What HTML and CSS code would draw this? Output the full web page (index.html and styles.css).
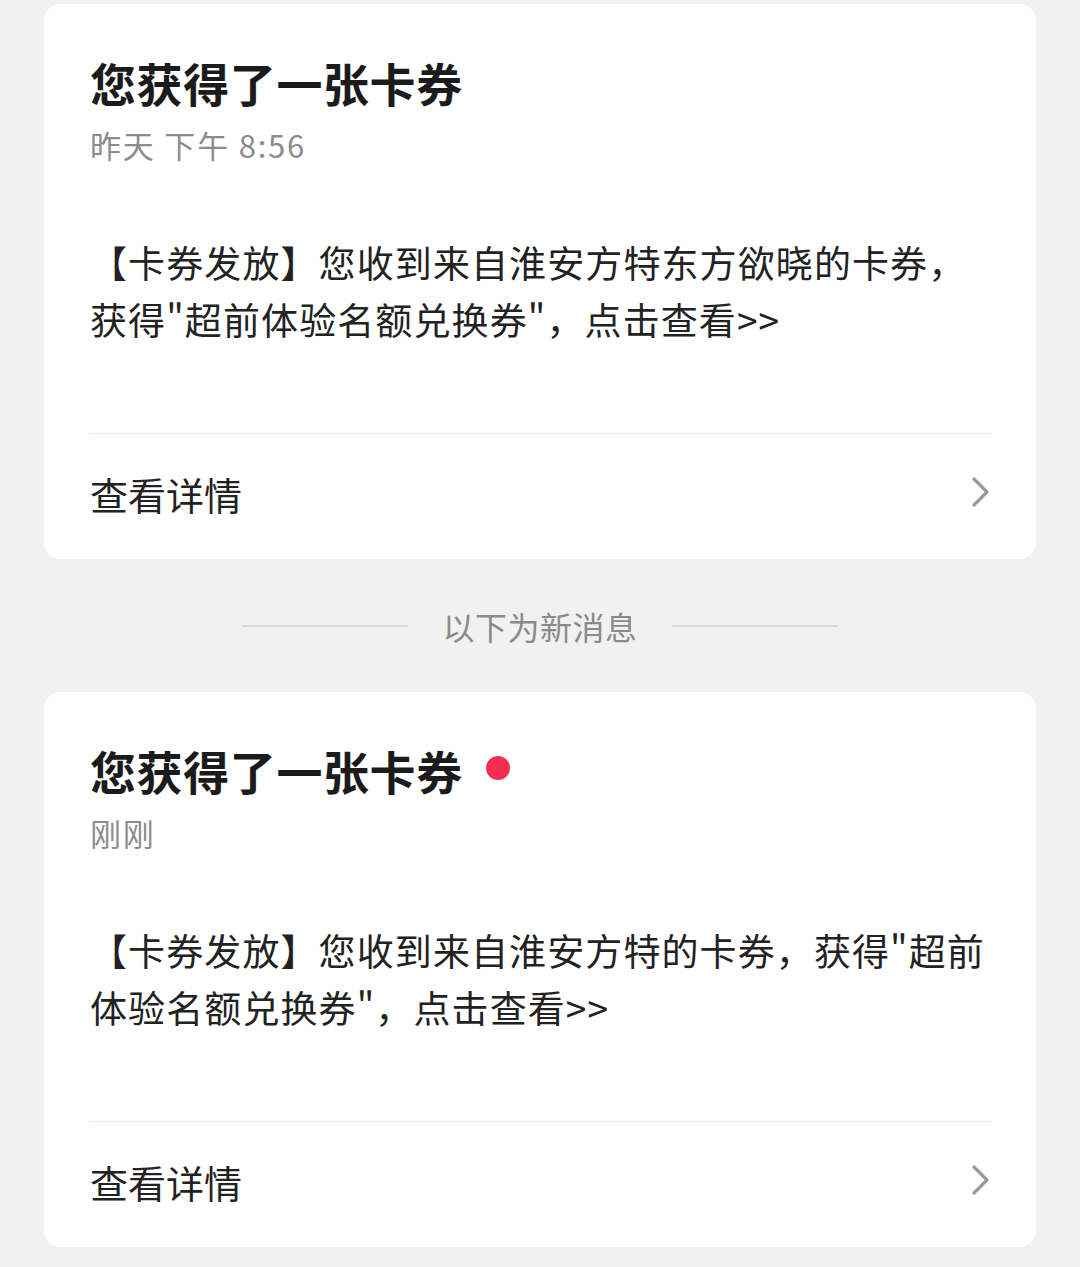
FILE: index.html
```html
<!DOCTYPE html>
<html lang="zh-CN">
<head>
<meta charset="utf-8">
<link rel="stylesheet" href="styles.css">
</head>
<body>
<div class="page">
  <div class="card card-first">
    <div class="title-row"><h2 class="title">您获得了一张卡券</h2></div>
    <div class="time">昨天 下午 8:56</div>
    <p class="body">【卡券发放】您收到来自淮安方特东方欲晓的卡券，<br>获得"超前体验名额兑换券"，点击查看&gt;&gt;</p>
    <div class="footer">
      <span class="footer-label">查看详情</span>
      <svg class="chevron" width="20" height="32" viewBox="0 0 20 32"><path d="M3 3 L16 16 L3 29" fill="none" stroke="#9a9a9a" stroke-width="3.2" stroke-linecap="round" stroke-linejoin="round"/></svg>
    </div>
  </div>

  <div class="separator">
    <span class="sep-line"></span>
    <span class="sep-text">以下为新消息</span>
    <span class="sep-line"></span>
  </div>

  <div class="card">
    <div class="title-row"><h2 class="title">您获得了一张卡券</h2><span class="dot"></span></div>
    <div class="time">刚刚</div>
    <p class="body">【卡券发放】您收到来自淮安方特的卡券，获得"超前<br>体验名额兑换券"，点击查看&gt;&gt;</p>
    <div class="footer">
      <span class="footer-label">查看详情</span>
      <svg class="chevron" width="20" height="32" viewBox="0 0 20 32"><path d="M3 3 L16 16 L3 29" fill="none" stroke="#9a9a9a" stroke-width="3.2" stroke-linecap="round" stroke-linejoin="round"/></svg>
    </div>
  </div>
</div>
</body>
</html>
```

FILE: styles.css
```css
* { box-sizing: border-box; }
html, body {
  margin: 0;
  padding: 0;
  background: #f1f1f1;
  font-family: "Noto Sans CJK SC", "Noto Sans", sans-serif;
}
.page {
  width: 1080px;
  height: 1267px;
  padding: 4px 44px 0 44px;
  overflow: hidden;
}
.card {
  background: #ffffff;
  border-radius: 16px;
  height: 555px;
  padding: 50px 44px 0 46px;
  display: flex;
  flex-direction: column;
}
.title-row {
  display: flex;
  align-items: center;
  height: 56px;
}
.title {
  margin: 0;
  font-size: 46px;
  line-height: 56px;
  font-weight: 700;
  letter-spacing: 0.6px;
  color: #1b1b1b;
}
.dot {
  width: 24px;
  height: 24px;
  border-radius: 50%;
  background: #f42e51;
  margin-left: 23px;
  margin-top: -4px;
}
.time {
  margin-top: 15px;
  font-size: 31px;
  line-height: 40px;
  letter-spacing: 1.8px;
  color: #8c8c8c;
}
.body {
  margin: 69px 0 0 0;
  font-size: 37px;
  line-height: 57px;
  letter-spacing: 1.1px;
  color: #222222;
  height: 114px;
}
.footer {
  margin-top: 85px;
  border-top: 1.5px solid #ebebeb;
  height: 120px;
  display: flex;
  align-items: center;
  justify-content: space-between;
}
.footer-label {
  font-size: 38px;
  line-height: 50px;
  color: #222222;
}
.chevron {
  margin-right: 1px;
  margin-top: -3px;
}
.separator {
  height: 133px;
  display: flex;
  align-items: center;
  justify-content: center;
  gap: 34px;
}
.sep-line {
  width: 166px;
  height: 2px;
  background: #d9d9d9;
}
.sep-text {
  font-size: 32px;
  color: #8a8a8a;
  line-height: 40px;
  letter-spacing: 0.5px;
}
```
